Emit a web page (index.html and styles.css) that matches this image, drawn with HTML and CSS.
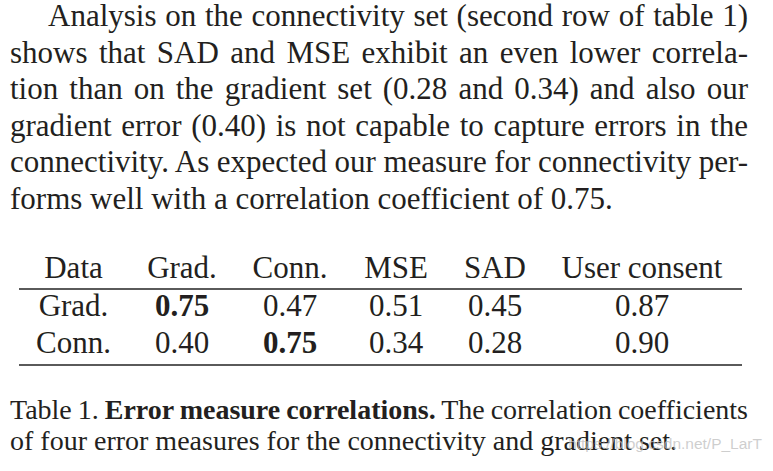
FILE: index.html
```html
<!DOCTYPE html>
<html lang="en">
<head>
<meta charset="utf-8">
<title>Error measure correlations</title>
<link rel="stylesheet" href="styles.css">
</head>
<body>
<div class="page">
  <p class="para">
    <span class="line first">Analysis on the connectivity set (second row of table 1)</span>
    <span class="line">shows that SAD and MSE exhibit an even lower correla-</span>
    <span class="line">tion than on the gradient set (0.28 and 0.34) and also our</span>
    <span class="line">gradient error (0.40) is not capable to capture errors in the</span>
    <span class="line">connectivity. As expected our measure for connectivity per-</span>
    <span class="line last">forms well with a correlation coefficient of 0.75.</span>
  </p>

  <div class="table">
    <div class="row head">
      <div class="cell">Data</div>
      <div class="cell">Grad.</div>
      <div class="cell">Conn.</div>
      <div class="cell">MSE</div>
      <div class="cell">SAD</div>
      <div class="cell">User consent</div>
    </div>
    <div class="row">
      <div class="cell">Grad.</div>
      <div class="cell"><b>0.75</b></div>
      <div class="cell">0.47</div>
      <div class="cell">0.51</div>
      <div class="cell">0.45</div>
      <div class="cell">0.87</div>
    </div>
    <div class="row lastrow">
      <div class="cell">Conn.</div>
      <div class="cell">0.40</div>
      <div class="cell"><b>0.75</b></div>
      <div class="cell">0.34</div>
      <div class="cell">0.28</div>
      <div class="cell">0.90</div>
    </div>
  </div>

  <div class="caption">
    <span class="line">Table 1. <b>Error measure correlations.</b> The correlation coefficients</span>
    <span class="line last">of four error measures for the connectivity and gradient set.</span>
    <span class="watermark">https://blog.csdn.net/P_LarT</span>
  </div>
</div>
</body>
</html>
```

FILE: styles.css
```css
html, body {
  margin: 0;
  padding: 0;
  background: #ffffff;
}

body {
  font-family: "Liberation Serif", "Times New Roman", serif;
  color: #231f20;
}

.page {
  width: 738px;
  margin: 0 0 0 10px;
}

.para {
  margin: -2px 0 0 0;
  font-size: 31px;
  line-height: 36.6px;
  word-spacing: -3px;
}

.line {
  display: block;
  text-align: justify;
  text-align-last: justify;
  white-space: normal;
}

.line.first {
  text-indent: 38px;
}

.line.last {
  text-align-last: left;
}

.para .line.last {
  word-spacing: 0;
}

.table {
  margin: 34px 0 0 9px;
  width: 723px;
  font-size: 31px;
  line-height: 31px;
}

.row {
  display: grid;
  grid-template-columns: 109px 108px 108px 104px 94px 200px;
  height: 37px;
  box-sizing: border-box;
}

.row.head {
  height: 38px;
  border-bottom: 2px solid #5a5a5a;
}

.row.lastrow {
  border-bottom: 2px solid #5a5a5a;
  height: 39px;
}

.cell {
  text-align: center;
  white-space: nowrap;
}

.cell b {
  font-weight: bold;
}

.caption {
  position: relative;
  margin-top: 28px;
  font-size: 28px;
  line-height: 31.6px;
  word-spacing: -3px;
}

.caption .line.last {
  word-spacing: 0;
}

.caption b {
  font-weight: bold;
}

.watermark {
  position: absolute;
  right: -14px;
  bottom: 4px;
  font-family: "Liberation Sans", Arial, sans-serif;
  font-size: 15.5px;
  line-height: 18px;
  word-spacing: 0;
  color: rgba(190, 190, 190, 0.75);
  white-space: nowrap;
}
```
